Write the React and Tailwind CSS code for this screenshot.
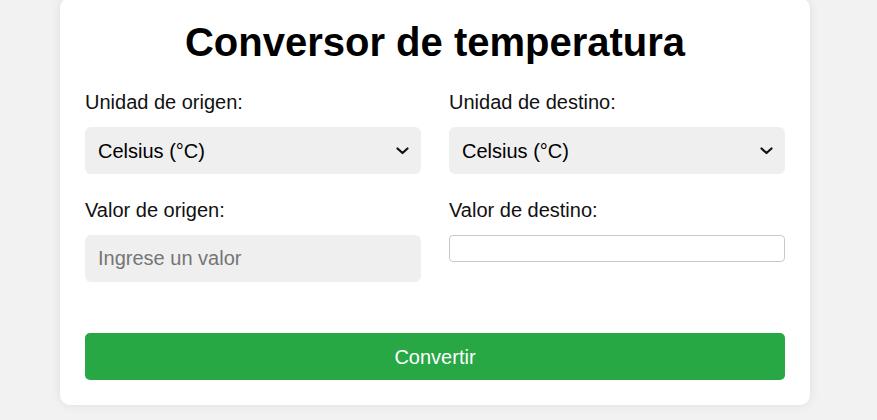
import React, { useState } from 'react';

const font = { fontFamily: '"Liberation Sans", Arial, sans-serif' };

function Chevron() {
    return (
        <svg width="13" height="8" viewBox="0 0 13 8" className="pointer-events-none absolute right-[12px] top-1/2 -translate-y-1/2">
            <polyline points="1.5,1.5 6.5,6 11.5,1.5" fill="none" stroke="#111" strokeWidth="2.2" strokeLinecap="round" strokeLinejoin="round" />
        </svg>
    );
}

function UnitSelect({ value, onChange }) {
    return (
        <div className="relative">
            <select
                value={value}
                onChange={e => onChange(e.target.value)}
                className="w-full h-[47px] appearance-none bg-[#efefef] rounded-[6px] pl-[13px] pr-8 text-[20px] text-black outline-none"
            >
                <option value="C">Celsius (°C)</option>
                <option value="F">Fahrenheit (°F)</option>
                <option value="K">Kelvin (K)</option>
            </select>
            <Chevron />
        </div>
    );
}

export default function App() {
    const [from, setFrom] = useState('C');
    const [to, setTo] = useState('C');
    const [value, setValue] = useState('');
    const [result, setResult] = useState('');

    const convert = () => {
        const v = parseFloat(value);
        if (isNaN(v)) return;
        let c = from === 'C' ? v : from === 'F' ? (v - 32) * 5 / 9 : v - 273.15;
        let out = to === 'C' ? c : to === 'F' ? c * 9 / 5 + 32 : c + 273.15;
        setResult(String(Math.round(out * 100) / 100));
    };

    return (
        <div className="min-h-[420px] bg-[#f2f2f2] overflow-hidden" style={font}>
            <div className="ml-[60px] -mt-[2px] w-[750px] bg-white rounded-[10px] shadow-[0_0_12px_rgba(0,0,0,0.08)] px-[25px] pt-[21px] pb-[25px]">
                <h1 className="text-[40px] leading-[46px] font-bold text-black text-center mb-[26px]">
                    Conversor de temperatura
                </h1>

                <div className="grid grid-cols-2 gap-x-[28px] gap-y-[25px]">
                    <div>
                        <label className="block text-[20px] leading-[23px] text-[#111] mb-[13px]">Unidad de origen:</label>
                        <UnitSelect value={from} onChange={setFrom} />
                    </div>
                    <div>
                        <label className="block text-[20px] leading-[23px] text-[#111] mb-[13px]">Unidad de destino:</label>
                        <UnitSelect value={to} onChange={setTo} />
                    </div>
                    <div>
                        <label className="block text-[20px] leading-[23px] text-[#111] mb-[13px]">Valor de origen:</label>
                        <input
                            type="text"
                            value={value}
                            onChange={e => setValue(e.target.value)}
                            placeholder="Ingrese un valor"
                            className="w-full h-[47px] bg-[#efefef] rounded-[6px] pl-[13px] text-[20px] text-black placeholder-[#757575] outline-none"
                        />
                    </div>
                    <div>
                        <label className="block text-[20px] leading-[23px] text-[#111] mb-[13px]">Valor de destino:</label>
                        <input
                            type="text"
                            readOnly
                            value={result}
                            className="w-full h-[27px] bg-white border border-[#c9c9c9] rounded-[4px] px-2 text-[16px] outline-none"
                        />
                    </div>
                </div>

                <button
                    onClick={convert}
                    className="mt-[51px] w-full h-[47px] bg-[#28a745] rounded-[5px] text-white text-[20px]"
                >
                    Convertir
                </button>
            </div>
        </div>
    );
}
